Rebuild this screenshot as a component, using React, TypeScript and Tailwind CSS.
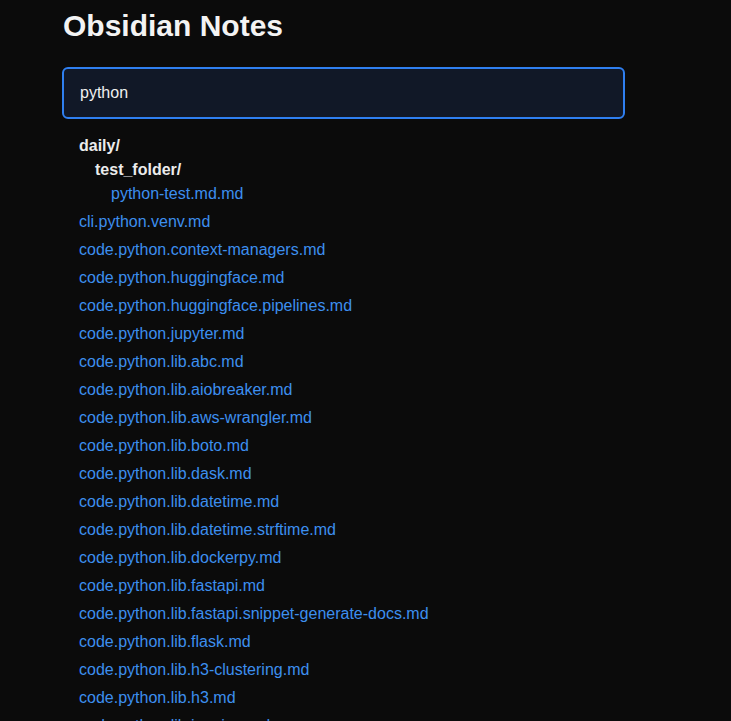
import React, { useState } from 'react';

type Node = { name: string; kind: 'folder' | 'file'; depth: number };

const results: Node[] = [
  { name: 'daily/', kind: 'folder', depth: 0 },
  { name: 'test_folder/', kind: 'folder', depth: 1 },
  { name: 'python-test.md.md', kind: 'file', depth: 2 },
  ...[
    'cli.python.venv.md',
    'code.python.context-managers.md',
    'code.python.huggingface.md',
    'code.python.huggingface.pipelines.md',
    'code.python.jupyter.md',
    'code.python.lib.abc.md',
    'code.python.lib.aiobreaker.md',
    'code.python.lib.aws-wrangler.md',
    'code.python.lib.boto.md',
    'code.python.lib.dask.md',
    'code.python.lib.datetime.md',
    'code.python.lib.datetime.strftime.md',
    'code.python.lib.dockerpy.md',
    'code.python.lib.fastapi.md',
    'code.python.lib.fastapi.snippet-generate-docs.md',
    'code.python.lib.flask.md',
    'code.python.lib.h3-clustering.md',
    'code.python.lib.h3.md',
    'code.python.lib.inquirer.md',
    'code.python.lib.jinja.md',
  ].map((name) => ({ name, kind: 'file' as const, depth: 0 })),
];

const indent = ['pl-0', 'pl-4', 'pl-8'];

export default function App() {
  const [query, setQuery] = useState('python');

  return (
    <div className="min-h-screen bg-[#0b0b0b] text-[#e5e5e5] font-['Liberation_Sans',Arial,sans-serif]">
      <div className="w-[563px] ml-[62px] pt-[8px]">
        {/* Header */}
        <h1 className="text-3xl font-bold text-[#f3f3f3] pl-px">Obsidian Notes</h1>

        {/* Search */}
        <input
          value={query}
          onChange={(e) => setQuery(e.target.value)}
          className="mt-[23px] w-full h-[52px] px-4 py-3 text-base leading-6 rounded-md bg-[#111827] text-[#f0f0f0] border-2 border-[#2f7ff0] outline-none"
        />

        {/* Results */}
        <ul className="mt-[15px] px-[17px]">
          {results.map((n, i) => (
            <li
              key={i}
              className={`leading-6 text-base ${indent[n.depth]} ${
                n.kind === 'folder' ? 'font-bold text-[#ececec]' : 'mb-1 text-[#3d8fef]'
              }`}
            >
              {n.kind === 'file' ? <a href="#">{n.name}</a> : n.name}
            </li>
          ))}
        </ul>
      </div>
    </div>
  );
}
